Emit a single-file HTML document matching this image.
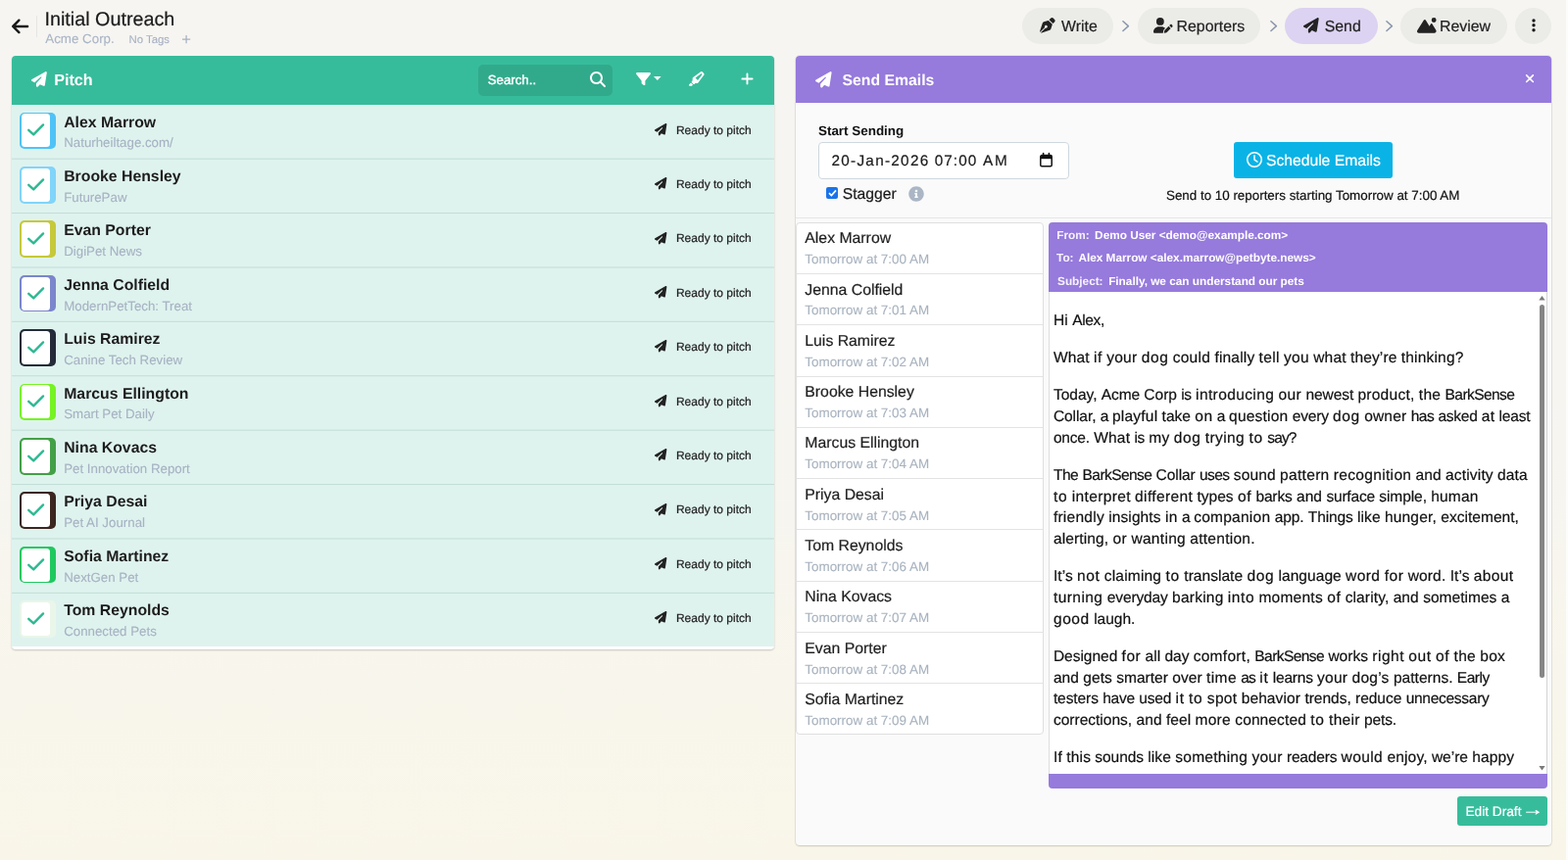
<!DOCTYPE html>
<html lang="en">
<head>
<meta charset="utf-8">
<title>Initial Outreach</title>
<style>
*{box-sizing:border-box;margin:0;padding:0}
html,body{width:1600px;height:878px;overflow:hidden}
body{position:relative;font-family:"Liberation Sans",Arial,sans-serif;color:#1a1a1a;background:linear-gradient(180deg,#f6f5f1 0%,#f6f5f1 45%,#f9f6e9 100%)}
#app,section,header,nav,ul,li,main{position:absolute;left:0;top:0;width:0;height:0;list-style:none}
#app{width:1600px;height:878px;will-change:transform;text-rendering:geometricPrecision}
.t,.k{position:absolute;white-space:nowrap}
.t{-webkit-text-stroke-width:.2px}
.b{position:absolute}
.ic{position:absolute;display:block;overflow:visible}
</style>
</head>
<body>
<div id="app">

<div class="b" style="left:1598px;top:0px;width:2px;height:878px;background:#fcfcfa;"></div>
<header>
<svg class="ic" style="left:12.1px;top:16.7px;width:17.3px;height:19.8px" viewBox="0 0 448 512" preserveAspectRatio="xMidYMid meet"><path fill="#1a1a1a" d="M9.4 233.4c-12.5 12.5-12.5 32.8 0 45.3l160 160c12.5 12.5 32.8 12.5 45.3 0s12.5-32.8 0-45.3L109.2 288 416 288c17.7 0 32-14.3 32-32s-14.3-32-32-32l-306.7 0L214.6 118.6c12.5-12.5 12.5-32.8 0-45.3s-32.8-12.5-45.3 0l-160 160z"/></svg>
<div class="b" style="left:37px;top:16px;width:1px;height:22px;background:#e6e5e1;"></div>
<h1 class="t" style="left:45.52px;top:8px;font-size:19.74px;line-height:25px;color:#1a1a1a;font-weight:400;">Initial Outreach</h1>
<div class="k" style="left:46.3px;top:31px;font-size:13.35px;line-height:17px;color:#aab4c6;-webkit-text-stroke-width:.1px;">Acme Corp.</div>
<div class="k" style="left:131.59px;top:34px;font-size:11.37px;line-height:15px;color:#a6b0c2;-webkit-text-stroke-width:.1px;">No Tags</div>
<svg class="ic" style="left:185.6px;top:35.9px;width:8.2px;height:8.2px" viewBox="0 0 10 10"><path d="M5 0v10M0 5h10" fill="none" stroke="#a6b0c2" stroke-width="1.5"/></svg>
</header>
<nav>
<div class="b" style="left:1043px;top:8px;width:93px;height:37px;background:#ebebe8;border-radius:19px;"></div>
<svg class="ic" style="left:1061px;top:18.2px;width:15.7px;height:15.7px" viewBox="0 0 512 512" preserveAspectRatio="xMidYMid meet"><path fill="#222" d="M368.4 18.3L312.7 74.1 437.9 199.3l55.7-55.7c21.9-21.9 21.9-57.3 0-79.2L447.6 18.3c-21.9-21.9-57.3-21.9-79.2 0zM288 94.6l-9.2 2.8L134.7 140.6c-19.9 6-35.7 21.2-42.3 41L3.8 445.8c-3.8 11.3-1 23.9 7.3 32.4L164.7 324.7c-3-6.3-4.7-13.3-4.7-20.7c0-26.5 21.5-48 48-48s48 21.5 48 48s-21.5 48-48 48c-7.4 0-14.4-1.7-20.7-4.7L33.7 500.9c8.6 8.3 21.1 11.2 32.4 7.3l264.3-88.6c19.7-6.6 35-22.4 41-42.3l43.2-144.1 2.8-9.2L288 94.6z"/></svg>
<div class="t" style="left:1083.03px;top:18px;font-size:15.85px;line-height:20px;color:#222;">Write</div>
<svg class="ic" style="left:1145.1px;top:21px;width:7.5px;height:11.3px" viewBox="0 0 8 12"><path d="M1 0.8L6.8 6 1 11.2" fill="none" stroke="#8c99ad" stroke-width="1.7" stroke-linecap="round" stroke-linejoin="round"/></svg>
<div class="b" style="left:1161px;top:8px;width:125.3px;height:37px;background:#ebebe8;border-radius:19px;"></div>
<svg class="ic" style="left:1177px;top:18.2px;width:19.6px;height:15.7px" viewBox="0 0 640 512" preserveAspectRatio="xMidYMid meet"><path fill="#222" d="M224 256A128 128 0 1 0 224 0a128 128 0 1 0 0 256zm-45.7 48C79.8 304 0 383.8 0 482.3C0 498.7 13.3 512 29.7 512H322.8c-3.1-8.8-3.7-18.4-1.4-27.8l15-60.1c2.8-11.3 8.6-21.5 16.8-29.7l40.3-40.3c-32.1-31-75.7-50.1-123.9-50.1H178.3zm435.5-68.3c-15.6-15.6-40.9-15.6-56.6 0l-29.4 29.4 71 71 29.4-29.4c15.6-15.6 15.6-40.9 0-56.6l-14.4-14.4zM375.9 417c-4.1 4.1-7 9.2-8.4 14.9l-15 60.1c-1.4 5.5 .2 11.2 4.2 15.2s9.7 5.6 15.2 4.2l60.1-15c5.6-1.4 10.8-4.3 14.9-8.4L576.1 358.7l-71-71L375.9 417z"/></svg>
<div class="t" style="left:1200.6px;top:18px;font-size:15.85px;line-height:20px;color:#222;">Reporters</div>
<svg class="ic" style="left:1295.5px;top:21px;width:7.5px;height:11.3px" viewBox="0 0 8 12"><path d="M1 0.8L6.8 6 1 11.2" fill="none" stroke="#8c99ad" stroke-width="1.7" stroke-linecap="round" stroke-linejoin="round"/></svg>
<div class="b" style="left:1311px;top:8px;width:94.5px;height:37px;background:#dcd2f1;border-radius:19px;"></div>
<svg class="ic" style="left:1329.5px;top:18.2px;width:15.7px;height:15.7px" viewBox="0 0 512 512" preserveAspectRatio="xMidYMid meet"><path fill="#222" d="M498.1 5.6c10.1 7 15.4 19.1 13.5 31.2l-64 416c-1.5 9.7-7.4 18.2-16 23s-18.9 5.4-28 1.6L284 427.7l-68.5 74.1c-8.9 9.7-22.9 12.9-35.2 8.1S160 493.2 160 480V396.4c0-4 1.5-7.8 4.2-10.7L331.8 202.8c5.8-6.3 5.6-16-.4-22s-15.7-6.4-22-.7L106 360.8 17.7 316.6C7.1 311.3 .3 300.7 0 288.9s5.9-22.8 16.1-28.7l448-256c10.7-6.1 23.9-5.5 34 1.4z"/></svg>
<div class="t" style="left:1351.72px;top:18px;font-size:15.85px;line-height:20px;color:#222;">Send</div>
<svg class="ic" style="left:1413.9px;top:21px;width:7.5px;height:11.3px" viewBox="0 0 8 12"><path d="M1 0.8L6.8 6 1 11.2" fill="none" stroke="#8c99ad" stroke-width="1.7" stroke-linecap="round" stroke-linejoin="round"/></svg>
<div class="b" style="left:1429.4px;top:8px;width:108.4px;height:37px;background:#ebebe8;border-radius:19px;"></div>
<svg class="ic" style="left:1446.2px;top:18.2px;width:19.6px;height:15.7px" viewBox="0 0 640 512" preserveAspectRatio="xMidYMid meet"><path fill="#222" d="M560 160A80 80 0 1 0 560 0a80 80 0 1 0 0 160zM55.9 512H381.1h75H578.9c33.8 0 61.1-27.4 61.1-61.1c0-11.2-3.1-22.2-8.9-31.8l-132-216.3C495 196.1 487.8 192 480 192s-15 4.1-19.1 10.7l-48.2 79L286.8 81c-6.6-10.6-18.3-17-30.8-17s-24.1 6.4-30.8 17L8.6 426.4C3 435.3 0 445.6 0 456.1C0 487 25 512 55.9 512z"/></svg>
<div class="t" style="left:1469.11px;top:18px;font-size:15.85px;line-height:20px;color:#222;">Review</div>
<div class="b" style="left:1546px;top:8px;width:37px;height:37px;background:#ebebe8;border-radius:19px;"></div>
<svg class="ic" style="left:1562.6px;top:18.2px;width:4px;height:15.6px" viewBox="0 0 128 512" preserveAspectRatio="xMidYMid meet"><path fill="#1a1a1a" d="M64 360a56 56 0 1 0 0 112 56 56 0 1 0 0-112zm0-160a56 56 0 1 0 0 112 56 56 0 1 0 0-112zM120 96A56 56 0 1 0 8 96a56 56 0 1 0 112 0z"/></svg>
</nav>
<section id="pitch">
<div class="b" style="left:12px;top:57px;width:778px;height:605.5px;background:#fff;border-radius:4px;box-shadow:0 1px 2px rgba(0,0,0,.2);"></div>
<div class="b" style="left:12px;top:106.6px;width:778px;height:553px;background:#dff3ee;"></div>
<div class="b" style="left:12px;top:57px;width:778px;height:49.6px;background:#37bc9b;border-radius:4px 4px 0 0;"></div>
<svg class="ic" style="left:32px;top:73px;width:15.8px;height:15.8px" viewBox="0 0 512 512" preserveAspectRatio="xMidYMid meet"><path fill="#fff" d="M498.1 5.6c10.1 7 15.4 19.1 13.5 31.2l-64 416c-1.5 9.7-7.4 18.2-16 23s-18.9 5.4-28 1.6L284 427.7l-68.5 74.1c-8.9 9.7-22.9 12.9-35.2 8.1S160 493.2 160 480V396.4c0-4 1.5-7.8 4.2-10.7L331.8 202.8c5.8-6.3 5.6-16-.4-22s-15.7-6.4-22-.7L106 360.8 17.7 316.6C7.1 311.3 .3 300.7 0 288.9s5.9-22.8 16.1-28.7l448-256c10.7-6.1 23.9-5.5 34 1.4z"/></svg>
<h2 class="k" style="left:55.2px;top:72px;font-size:16.17px;line-height:21px;font-weight:700;color:#fff;">Pitch</h2>
<div class="b" style="left:488px;top:66px;width:136.7px;height:31.5px;background:#31aa8c;border-radius:5px;"></div>
<div class="t" style="left:497.71px;top:73px;font-size:13.2px;line-height:17px;color:#fff;-webkit-text-stroke-width:.4px;letter-spacing:0.042px;">Search..</div>
<svg class="ic" style="left:601.5px;top:72.5px;width:16px;height:16px" viewBox="0 0 512 512" preserveAspectRatio="xMidYMid meet"><path fill="#fff" d="M416 208c0 45.9-14.9 88.3-40 122.7L502.6 457.4c12.5 12.5 12.5 32.8 0 45.3s-32.8 12.5-45.3 0L330.7 376c-34.4 25.2-76.8 40-122.7 40C93.1 416 0 322.9 0 208S93.1 0 208 0S416 93.1 416 208zM208 352a144 144 0 1 0 0-288 144 144 0 1 0 0 288z"/></svg>
<svg class="ic" style="left:648.6px;top:72.6px;width:15px;height:15px" viewBox="0 0 512 512" preserveAspectRatio="xMidYMid meet"><path fill="#fff" d="M3.9 54.9C10.5 40.9 24.5 32 40 32H472c15.5 0 29.5 8.9 36.1 22.9s4.6 30.5-5.2 42.5L320 320.9V448c0 12.1-6.8 23.2-17.7 28.6s-23.8 4.3-33.5-3l-64-48c-8.1-6-12.8-15.5-12.8-25.6V320.9L9 97.3C-.7 85.4-2.8 68.8 3.9 54.9z"/></svg>
<svg class="ic" style="left:666.8px;top:78.2px;width:7.6px;height:4px" viewBox="0 0 8 4"><path d="M0 0h8L4 4z" fill="#fff"/></svg>
<svg class="ic" style="left:703.2px;top:72.8px;width:16.5px;height:14.7px" viewBox="0 0 576 512" preserveAspectRatio="xMidYMid meet"><path fill="#fff" d="M315 315l158.4-215L444.1 70.6 229 229 315 315zm-187 5l0 0V248.3c0-15.3 7.2-29.6 19.5-38.6L420.6 8.4C428 2.9 437 0 446.2 0c11.4 0 22.4 4.5 30.5 12.6l54.8 54.8c8.1 8.1 12.6 19 12.6 30.5c0 9.2-2.9 18.2-8.4 25.6L334.4 396.5c-9 12.3-23.4 19.5-38.6 19.5H224l-25.4 25.4c-12.5 12.5-32.8 12.5-45.3 0l-50.7-50.7c-12.5-12.5-12.5-32.8 0-45.3L128 320zM7 466.3l63-63 70.6 70.6-31 31c-4.5 4.5-10.6 7-17 7H24c-13.3 0-24-10.7-24-24v-4.7c0-6.4 2.5-12.5 7-17z"/></svg>
<svg class="ic" style="left:755.5px;top:72.7px;width:13px;height:15px" viewBox="0 0 448 512" preserveAspectRatio="xMidYMid meet"><path fill="#fff" d="M256 80c0-17.7-14.3-32-32-32s-32 14.3-32 32V224H48c-17.7 0-32 14.3-32 32s14.3 32 32 32H192V432c0 17.7 14.3 32 32 32s32-14.3 32-32V288H400c17.7 0 32-14.3 32-32s-14.3-32-32-32H256V80z"/></svg>
<ul>
<li>
<div class="b" style="left:19.8px;top:114.6px;width:37.6px;height:37.6px;background:#4fc3f7;border-radius:5px;"></div>
<div class="b" style="left:21.5px;top:116.3px;width:29.6px;height:34.2px;background:#fff;border-radius:3.5px;"></div>
<svg class="ic" style="left:28px;top:126.4px;width:17.4px;height:12.8px" viewBox="0 0 18.4 13.4"><path d="M1.3 7.2L6.6 12 17 1.4" fill="none" stroke="#2db892" stroke-width="2.5" stroke-linecap="round" stroke-linejoin="round"/></svg>
<h3 class="k" style="left:65.2px;top:116px;font-size:15.8px;line-height:20px;font-weight:700;color:#1c1c1c;">Alex Marrow</h3>
<div class="k" style="left:65.2px;top:137px;font-size:13.3px;line-height:17px;color:#a7b2c3;-webkit-text-stroke-width:.1px;">Naturheiltage.com/</div>
<svg class="ic" style="left:667.6px;top:125.8px;width:12.4px;height:12.4px" viewBox="0 0 512 512" preserveAspectRatio="xMidYMid meet"><path fill="#222" d="M498.1 5.6c10.1 7 15.4 19.1 13.5 31.2l-64 416c-1.5 9.7-7.4 18.2-16 23s-18.9 5.4-28 1.6L284 427.7l-68.5 74.1c-8.9 9.7-22.9 12.9-35.2 8.1S160 493.2 160 480V396.4c0-4 1.5-7.8 4.2-10.7L331.8 202.8c5.8-6.3 5.6-16-.4-22s-15.7-6.4-22-.7L106 360.8 17.7 316.6C7.1 311.3 .3 300.7 0 288.9s5.9-22.8 16.1-28.7l448-256c10.7-6.1 23.9-5.5 34 1.4z"/></svg>
<div class="t" style="left:689.94px;top:126px;font-size:12px;line-height:15px;color:#222;">Ready to pitch</div>
</li>
<li>
<div class="b" style="left:12px;top:161px;width:778px;height:1px;background:#c2dcd6;transform:translateY(0.65px);"></div>
<div class="b" style="left:19.8px;top:170px;width:37.6px;height:37.6px;background:#81d4fa;border-radius:5px;"></div>
<div class="b" style="left:21.5px;top:171.7px;width:29.6px;height:34.2px;background:#fff;border-radius:3.5px;"></div>
<svg class="ic" style="left:28px;top:181.8px;width:17.4px;height:12.8px" viewBox="0 0 18.4 13.4"><path d="M1.3 7.2L6.6 12 17 1.4" fill="none" stroke="#2db892" stroke-width="2.5" stroke-linecap="round" stroke-linejoin="round"/></svg>
<h3 class="k" style="left:65.2px;top:171px;font-size:15.8px;line-height:20px;font-weight:700;color:#1c1c1c;">Brooke Hensley</h3>
<div class="k" style="left:65.2px;top:193px;font-size:13.3px;line-height:17px;color:#a7b2c3;-webkit-text-stroke-width:.1px;">FuturePaw</div>
<svg class="ic" style="left:667.6px;top:181.2px;width:12.4px;height:12.4px" viewBox="0 0 512 512" preserveAspectRatio="xMidYMid meet"><path fill="#222" d="M498.1 5.6c10.1 7 15.4 19.1 13.5 31.2l-64 416c-1.5 9.7-7.4 18.2-16 23s-18.9 5.4-28 1.6L284 427.7l-68.5 74.1c-8.9 9.7-22.9 12.9-35.2 8.1S160 493.2 160 480V396.4c0-4 1.5-7.8 4.2-10.7L331.8 202.8c5.8-6.3 5.6-16-.4-22s-15.7-6.4-22-.7L106 360.8 17.7 316.6C7.1 311.3 .3 300.7 0 288.9s5.9-22.8 16.1-28.7l448-256c10.7-6.1 23.9-5.5 34 1.4z"/></svg>
<div class="t" style="left:689.94px;top:181px;font-size:12px;line-height:15px;color:#222;">Ready to pitch</div>
</li>
<li>
<div class="b" style="left:12px;top:217px;width:778px;height:1px;background:#c2dcd6;transform:translateY(0.05px);"></div>
<div class="b" style="left:19.8px;top:225.4px;width:37.6px;height:37.6px;background:#c6c93a;border-radius:5px;"></div>
<div class="b" style="left:21.5px;top:227.1px;width:29.6px;height:34.2px;background:#fff;border-radius:3.5px;"></div>
<svg class="ic" style="left:28px;top:237.2px;width:17.4px;height:12.8px" viewBox="0 0 18.4 13.4"><path d="M1.3 7.2L6.6 12 17 1.4" fill="none" stroke="#2db892" stroke-width="2.5" stroke-linecap="round" stroke-linejoin="round"/></svg>
<h3 class="k" style="left:65.2px;top:226px;font-size:15.8px;line-height:20px;font-weight:700;color:#1c1c1c;">Evan Porter</h3>
<div class="k" style="left:65.2px;top:248px;font-size:13.3px;line-height:17px;color:#a7b2c3;-webkit-text-stroke-width:.1px;">DigiPet News</div>
<svg class="ic" style="left:667.6px;top:236.6px;width:12.4px;height:12.4px" viewBox="0 0 512 512" preserveAspectRatio="xMidYMid meet"><path fill="#222" d="M498.1 5.6c10.1 7 15.4 19.1 13.5 31.2l-64 416c-1.5 9.7-7.4 18.2-16 23s-18.9 5.4-28 1.6L284 427.7l-68.5 74.1c-8.9 9.7-22.9 12.9-35.2 8.1S160 493.2 160 480V396.4c0-4 1.5-7.8 4.2-10.7L331.8 202.8c5.8-6.3 5.6-16-.4-22s-15.7-6.4-22-.7L106 360.8 17.7 316.6C7.1 311.3 .3 300.7 0 288.9s5.9-22.8 16.1-28.7l448-256c10.7-6.1 23.9-5.5 34 1.4z"/></svg>
<div class="t" style="left:689.94px;top:236px;font-size:12px;line-height:15px;color:#222;">Ready to pitch</div>
</li>
<li>
<div class="b" style="left:12px;top:272px;width:778px;height:1px;background:#c2dcd6;transform:translateY(0.45px);"></div>
<div class="b" style="left:19.8px;top:280.8px;width:37.6px;height:37.6px;background:#7b86cc;border-radius:5px;"></div>
<div class="b" style="left:21.5px;top:282.5px;width:29.6px;height:34.2px;background:#fff;border-radius:3.5px;"></div>
<svg class="ic" style="left:28px;top:292.6px;width:17.4px;height:12.8px" viewBox="0 0 18.4 13.4"><path d="M1.3 7.2L6.6 12 17 1.4" fill="none" stroke="#2db892" stroke-width="2.5" stroke-linecap="round" stroke-linejoin="round"/></svg>
<h3 class="k" style="left:65.2px;top:282px;font-size:15.8px;line-height:20px;font-weight:700;color:#1c1c1c;">Jenna Colfield</h3>
<div class="k" style="left:65.2px;top:304px;font-size:13.3px;line-height:17px;color:#a7b2c3;-webkit-text-stroke-width:.1px;">ModernPetTech: Treat</div>
<svg class="ic" style="left:667.6px;top:292px;width:12.4px;height:12.4px" viewBox="0 0 512 512" preserveAspectRatio="xMidYMid meet"><path fill="#222" d="M498.1 5.6c10.1 7 15.4 19.1 13.5 31.2l-64 416c-1.5 9.7-7.4 18.2-16 23s-18.9 5.4-28 1.6L284 427.7l-68.5 74.1c-8.9 9.7-22.9 12.9-35.2 8.1S160 493.2 160 480V396.4c0-4 1.5-7.8 4.2-10.7L331.8 202.8c5.8-6.3 5.6-16-.4-22s-15.7-6.4-22-.7L106 360.8 17.7 316.6C7.1 311.3 .3 300.7 0 288.9s5.9-22.8 16.1-28.7l448-256c10.7-6.1 23.9-5.5 34 1.4z"/></svg>
<div class="t" style="left:689.94px;top:292px;font-size:12px;line-height:15px;color:#222;">Ready to pitch</div>
</li>
<li>
<div class="b" style="left:12px;top:327px;width:778px;height:1px;background:#c2dcd6;transform:translateY(0.85px);"></div>
<div class="b" style="left:19.8px;top:336.2px;width:37.6px;height:37.6px;background:#252b38;border-radius:5px;"></div>
<div class="b" style="left:21.5px;top:337.9px;width:29.6px;height:34.2px;background:#fff;border-radius:3.5px;"></div>
<svg class="ic" style="left:28px;top:348px;width:17.4px;height:12.8px" viewBox="0 0 18.4 13.4"><path d="M1.3 7.2L6.6 12 17 1.4" fill="none" stroke="#2db892" stroke-width="2.5" stroke-linecap="round" stroke-linejoin="round"/></svg>
<h3 class="k" style="left:65.2px;top:337px;font-size:15.8px;line-height:20px;font-weight:700;color:#1c1c1c;">Luis Ramirez</h3>
<div class="k" style="left:65.2px;top:359px;font-size:13.3px;line-height:17px;color:#a7b2c3;-webkit-text-stroke-width:.1px;">Canine Tech Review</div>
<svg class="ic" style="left:667.6px;top:347.4px;width:12.4px;height:12.4px" viewBox="0 0 512 512" preserveAspectRatio="xMidYMid meet"><path fill="#222" d="M498.1 5.6c10.1 7 15.4 19.1 13.5 31.2l-64 416c-1.5 9.7-7.4 18.2-16 23s-18.9 5.4-28 1.6L284 427.7l-68.5 74.1c-8.9 9.7-22.9 12.9-35.2 8.1S160 493.2 160 480V396.4c0-4 1.5-7.8 4.2-10.7L331.8 202.8c5.8-6.3 5.6-16-.4-22s-15.7-6.4-22-.7L106 360.8 17.7 316.6C7.1 311.3 .3 300.7 0 288.9s5.9-22.8 16.1-28.7l448-256c10.7-6.1 23.9-5.5 34 1.4z"/></svg>
<div class="t" style="left:689.94px;top:347px;font-size:12px;line-height:15px;color:#222;">Ready to pitch</div>
</li>
<li>
<div class="b" style="left:12px;top:383px;width:778px;height:1px;background:#c2dcd6;transform:translateY(0.25px);"></div>
<div class="b" style="left:19.8px;top:391.6px;width:37.6px;height:37.6px;background:#76f322;border-radius:5px;"></div>
<div class="b" style="left:21.5px;top:393.3px;width:29.6px;height:34.2px;background:#fff;border-radius:3.5px;"></div>
<svg class="ic" style="left:28px;top:403.4px;width:17.4px;height:12.8px" viewBox="0 0 18.4 13.4"><path d="M1.3 7.2L6.6 12 17 1.4" fill="none" stroke="#2db892" stroke-width="2.5" stroke-linecap="round" stroke-linejoin="round"/></svg>
<h3 class="k" style="left:65.2px;top:393px;font-size:15.8px;line-height:20px;font-weight:700;color:#1c1c1c;">Marcus Ellington</h3>
<div class="k" style="left:65.2px;top:414px;font-size:13.3px;line-height:17px;color:#a7b2c3;-webkit-text-stroke-width:.1px;">Smart Pet Daily</div>
<svg class="ic" style="left:667.6px;top:402.8px;width:12.4px;height:12.4px" viewBox="0 0 512 512" preserveAspectRatio="xMidYMid meet"><path fill="#222" d="M498.1 5.6c10.1 7 15.4 19.1 13.5 31.2l-64 416c-1.5 9.7-7.4 18.2-16 23s-18.9 5.4-28 1.6L284 427.7l-68.5 74.1c-8.9 9.7-22.9 12.9-35.2 8.1S160 493.2 160 480V396.4c0-4 1.5-7.8 4.2-10.7L331.8 202.8c5.8-6.3 5.6-16-.4-22s-15.7-6.4-22-.7L106 360.8 17.7 316.6C7.1 311.3 .3 300.7 0 288.9s5.9-22.8 16.1-28.7l448-256c10.7-6.1 23.9-5.5 34 1.4z"/></svg>
<div class="t" style="left:689.94px;top:403px;font-size:12px;line-height:15px;color:#222;">Ready to pitch</div>
</li>
<li>
<div class="b" style="left:12px;top:438px;width:778px;height:1px;background:#c2dcd6;transform:translateY(0.65px);"></div>
<div class="b" style="left:19.8px;top:447px;width:37.6px;height:37.6px;background:#43a047;border-radius:5px;"></div>
<div class="b" style="left:21.5px;top:448.7px;width:29.6px;height:34.2px;background:#fff;border-radius:3.5px;"></div>
<svg class="ic" style="left:28px;top:458.8px;width:17.4px;height:12.8px" viewBox="0 0 18.4 13.4"><path d="M1.3 7.2L6.6 12 17 1.4" fill="none" stroke="#2db892" stroke-width="2.5" stroke-linecap="round" stroke-linejoin="round"/></svg>
<h3 class="k" style="left:65.2px;top:448px;font-size:15.8px;line-height:20px;font-weight:700;color:#1c1c1c;">Nina Kovacs</h3>
<div class="k" style="left:65.2px;top:470px;font-size:13.3px;line-height:17px;color:#a7b2c3;-webkit-text-stroke-width:.1px;">Pet Innovation Report</div>
<svg class="ic" style="left:667.6px;top:458.2px;width:12.4px;height:12.4px" viewBox="0 0 512 512" preserveAspectRatio="xMidYMid meet"><path fill="#222" d="M498.1 5.6c10.1 7 15.4 19.1 13.5 31.2l-64 416c-1.5 9.7-7.4 18.2-16 23s-18.9 5.4-28 1.6L284 427.7l-68.5 74.1c-8.9 9.7-22.9 12.9-35.2 8.1S160 493.2 160 480V396.4c0-4 1.5-7.8 4.2-10.7L331.8 202.8c5.8-6.3 5.6-16-.4-22s-15.7-6.4-22-.7L106 360.8 17.7 316.6C7.1 311.3 .3 300.7 0 288.9s5.9-22.8 16.1-28.7l448-256c10.7-6.1 23.9-5.5 34 1.4z"/></svg>
<div class="t" style="left:689.94px;top:458px;font-size:12px;line-height:15px;color:#222;">Ready to pitch</div>
</li>
<li>
<div class="b" style="left:12px;top:494px;width:778px;height:1px;background:#c2dcd6;transform:translateY(0.05px);"></div>
<div class="b" style="left:19.8px;top:502.4px;width:37.6px;height:37.6px;background:#3b2620;border-radius:5px;"></div>
<div class="b" style="left:21.5px;top:504.1px;width:29.6px;height:34.2px;background:#fff;border-radius:3.5px;"></div>
<svg class="ic" style="left:28px;top:514.2px;width:17.4px;height:12.8px" viewBox="0 0 18.4 13.4"><path d="M1.3 7.2L6.6 12 17 1.4" fill="none" stroke="#2db892" stroke-width="2.5" stroke-linecap="round" stroke-linejoin="round"/></svg>
<h3 class="k" style="left:65.2px;top:503px;font-size:15.8px;line-height:20px;font-weight:700;color:#1c1c1c;">Priya Desai</h3>
<div class="k" style="left:65.2px;top:525px;font-size:13.3px;line-height:17px;color:#a7b2c3;-webkit-text-stroke-width:.1px;">Pet AI Journal</div>
<svg class="ic" style="left:667.6px;top:513.6px;width:12.4px;height:12.4px" viewBox="0 0 512 512" preserveAspectRatio="xMidYMid meet"><path fill="#222" d="M498.1 5.6c10.1 7 15.4 19.1 13.5 31.2l-64 416c-1.5 9.7-7.4 18.2-16 23s-18.9 5.4-28 1.6L284 427.7l-68.5 74.1c-8.9 9.7-22.9 12.9-35.2 8.1S160 493.2 160 480V396.4c0-4 1.5-7.8 4.2-10.7L331.8 202.8c5.8-6.3 5.6-16-.4-22s-15.7-6.4-22-.7L106 360.8 17.7 316.6C7.1 311.3 .3 300.7 0 288.9s5.9-22.8 16.1-28.7l448-256c10.7-6.1 23.9-5.5 34 1.4z"/></svg>
<div class="t" style="left:689.94px;top:513px;font-size:12px;line-height:15px;color:#222;">Ready to pitch</div>
</li>
<li>
<div class="b" style="left:12px;top:549px;width:778px;height:1px;background:#c2dcd6;transform:translateY(0.45px);"></div>
<div class="b" style="left:19.8px;top:557.8px;width:37.6px;height:37.6px;background:#1fc95f;border-radius:5px;"></div>
<div class="b" style="left:21.5px;top:559.5px;width:29.6px;height:34.2px;background:#fff;border-radius:3.5px;"></div>
<svg class="ic" style="left:28px;top:569.6px;width:17.4px;height:12.8px" viewBox="0 0 18.4 13.4"><path d="M1.3 7.2L6.6 12 17 1.4" fill="none" stroke="#2db892" stroke-width="2.5" stroke-linecap="round" stroke-linejoin="round"/></svg>
<h3 class="k" style="left:65.2px;top:559px;font-size:15.8px;line-height:20px;font-weight:700;color:#1c1c1c;">Sofia Martinez</h3>
<div class="k" style="left:65.2px;top:581px;font-size:13.3px;line-height:17px;color:#a7b2c3;-webkit-text-stroke-width:.1px;">NextGen Pet</div>
<svg class="ic" style="left:667.6px;top:569px;width:12.4px;height:12.4px" viewBox="0 0 512 512" preserveAspectRatio="xMidYMid meet"><path fill="#222" d="M498.1 5.6c10.1 7 15.4 19.1 13.5 31.2l-64 416c-1.5 9.7-7.4 18.2-16 23s-18.9 5.4-28 1.6L284 427.7l-68.5 74.1c-8.9 9.7-22.9 12.9-35.2 8.1S160 493.2 160 480V396.4c0-4 1.5-7.8 4.2-10.7L331.8 202.8c5.8-6.3 5.6-16-.4-22s-15.7-6.4-22-.7L106 360.8 17.7 316.6C7.1 311.3 .3 300.7 0 288.9s5.9-22.8 16.1-28.7l448-256c10.7-6.1 23.9-5.5 34 1.4z"/></svg>
<div class="t" style="left:689.94px;top:569px;font-size:12px;line-height:15px;color:#222;">Ready to pitch</div>
</li>
<li>
<div class="b" style="left:12px;top:604px;width:778px;height:1px;background:#c2dcd6;transform:translateY(0.85px);"></div>
<div class="b" style="left:19.8px;top:613.2px;width:37.6px;height:37.6px;background:#eaf6ea;border-radius:5px;"></div>
<div class="b" style="left:21.5px;top:614.9px;width:29.6px;height:34.2px;background:#fff;border-radius:3.5px;"></div>
<svg class="ic" style="left:28px;top:625px;width:17.4px;height:12.8px" viewBox="0 0 18.4 13.4"><path d="M1.3 7.2L6.6 12 17 1.4" fill="none" stroke="#2db892" stroke-width="2.5" stroke-linecap="round" stroke-linejoin="round"/></svg>
<h3 class="k" style="left:65.2px;top:614px;font-size:15.8px;line-height:20px;font-weight:700;color:#1c1c1c;">Tom Reynolds</h3>
<div class="k" style="left:65.2px;top:636px;font-size:13.3px;line-height:17px;color:#a7b2c3;-webkit-text-stroke-width:.1px;">Connected Pets</div>
<svg class="ic" style="left:667.6px;top:624.4px;width:12.4px;height:12.4px" viewBox="0 0 512 512" preserveAspectRatio="xMidYMid meet"><path fill="#222" d="M498.1 5.6c10.1 7 15.4 19.1 13.5 31.2l-64 416c-1.5 9.7-7.4 18.2-16 23s-18.9 5.4-28 1.6L284 427.7l-68.5 74.1c-8.9 9.7-22.9 12.9-35.2 8.1S160 493.2 160 480V396.4c0-4 1.5-7.8 4.2-10.7L331.8 202.8c5.8-6.3 5.6-16-.4-22s-15.7-6.4-22-.7L106 360.8 17.7 316.6C7.1 311.3 .3 300.7 0 288.9s5.9-22.8 16.1-28.7l448-256c10.7-6.1 23.9-5.5 34 1.4z"/></svg>
<div class="t" style="left:689.94px;top:624px;font-size:12px;line-height:15px;color:#222;">Ready to pitch</div>
</li>
</ul>
</section>
<section id="send">
<div class="b" style="left:812px;top:57px;width:771px;height:805.5px;background:#fafafa;border-radius:4px;box-shadow:0 0 0 1px rgba(0,0,0,.06),0 1px 2px rgba(0,0,0,.14);"></div>
<div class="b" style="left:812px;top:57px;width:771px;height:48px;background:#967adc;border-radius:4px 4px 0 0;"></div>
<svg class="ic" style="left:832px;top:72.5px;width:16.6px;height:16.6px" viewBox="0 0 512 512" preserveAspectRatio="xMidYMid meet"><path fill="#fff" d="M498.1 5.6c10.1 7 15.4 19.1 13.5 31.2l-64 416c-1.5 9.7-7.4 18.2-16 23s-18.9 5.4-28 1.6L284 427.7l-68.5 74.1c-8.9 9.7-22.9 12.9-35.2 8.1S160 493.2 160 480V396.4c0-4 1.5-7.8 4.2-10.7L331.8 202.8c5.8-6.3 5.6-16-.4-22s-15.7-6.4-22-.7L106 360.8 17.7 316.6C7.1 311.3 .3 300.7 0 288.9s5.9-22.8 16.1-28.7l448-256c10.7-6.1 23.9-5.5 34 1.4z"/></svg>
<h2 class="k" style="left:859.61px;top:73px;font-size:15.76px;line-height:20px;font-weight:700;color:#fff;">Send Emails</h2>
<svg class="ic" style="left:1555.7px;top:73.2px;width:10px;height:14.4px" viewBox="0 0 384 512" preserveAspectRatio="xMidYMid meet"><path fill="#fff" d="M342.6 150.6c12.5-12.5 12.5-32.8 0-45.3s-32.8-12.5-45.3 0L192 210.7 86.6 105.4c-12.5-12.5-32.8-12.5-45.3 0s-12.5 32.8 0 45.3L146.7 256 41.4 361.4c-12.5 12.5-12.5 32.8 0 45.3s32.8 12.5 45.3 0L192 301.3 297.4 406.6c12.5 12.5 32.8 12.5 45.3 0s12.5-32.8 0-45.3L237.3 256 342.6 150.6z"/></svg>
<div class="k" style="left:834.96px;top:125px;font-size:13.43px;line-height:17px;font-weight:700;color:#111;">Start Sending</div>
<div class="b" style="left:835.3px;top:145.3px;width:255.5px;height:37.4px;background:#fff;border:1px solid #cfd8df;border-radius:4px;"></div>
<div class="t" style="left:848.44px;top:155px;font-size:15.3px;line-height:20px;color:#1a1a1a;white-space:pre;"><span style="display:inline-block;width:105.23px;letter-spacing:1.288px">20-Jan-2026 </span><span style="display:inline-block;width:49.34px;letter-spacing:1.1px">07:00 </span><span style="display:inline-block;letter-spacing:1.844px">AM</span></div>
<svg class="ic" style="left:1061.4px;top:156px;width:13px;height:14.6px" viewBox="0 0 13 14.6"><path d="M2 2.6h9a1.2 1.2 0 0 1 1.2 1.2v8.8a1.2 1.2 0 0 1-1.2 1.2H2a1.2 1.2 0 0 1-1.2-1.2V3.8A1.2 1.2 0 0 1 2 2.6z" fill="none" stroke="#111" stroke-width="1.5"/><path d="M1 3h11v3.2H1z" fill="#111"/><path d="M3.6 0.6v2.6M9.4 0.6v2.6" stroke="#111" stroke-width="1.6" stroke-linecap="round"/></svg>
<div class="b" style="left:843px;top:191px;width:12px;height:12px;background:#1a73e8;border-radius:2px;"></div>
<svg class="ic" style="left:844.5px;top:193px;width:9px;height:8px" viewBox="0 0 9 8"><path d="M1 4.2l2.4 2.4L8 1.4" fill="none" stroke="#fff" stroke-width="1.7"/></svg>
<div class="t" style="left:859.8px;top:189px;font-size:15.7px;line-height:20px;color:#1a1a1a;">Stagger</div>
<svg class="ic" style="left:927px;top:189.8px;width:16px;height:16px" viewBox="0 0 512 512" preserveAspectRatio="xMidYMid meet"><path fill="#abb6c5" d="M256 8C119.043 8 8 119.083 8 256c0 136.997 111.043 248 248 248s248-111.003 248-248C504 119.083 392.957 8 256 8zm0 110c23.196 0 42 18.804 42 42s-18.804 42-42 42-42-18.804-42-42 18.804-42 42-42zm56 254c0 6.627-5.373 12-12 12h-88c-6.627 0-12-5.373-12-12v-24c0-6.627 5.373-12 12-12h12v-64h-12c-6.627 0-12-5.373-12-12v-24c0-6.627 5.373-12 12-12h64c6.627 0 12 5.373 12 12v100h12c6.627 0 12 5.373 12 12v24z"/></svg>
<div class="b" style="left:1258.8px;top:145px;width:162.5px;height:37px;background:#0ab3e6;border-radius:3px;"></div>
<svg class="ic" style="left:1271.5px;top:155.3px;width:16px;height:16px" viewBox="0 0 512 512" preserveAspectRatio="xMidYMid meet"><path fill="#fff" d="M464 256A208 208 0 1 1 48 256a208 208 0 1 1 416 0zM0 256a256 256 0 1 0 512 0A256 256 0 1 0 0 256zM232 120V256c0 8 4 15.5 10.7 20l96 64c11 7.4 25.9 4.4 33.3-6.7s4.4-25.9-6.7-33.3L280 243.2V120c0-13.3-10.7-24-24-24s-24 10.7-24 24z"/></svg>
<div class="t" style="left:1291.93px;top:155px;font-size:15.7px;line-height:20px;color:#fff;">Schedule Emails</div>
<div class="t" style="left:1190px;top:191px;font-size:13.39px;line-height:17px;color:#111;">Send to 10 reporters starting Tomorrow at 7:00 AM</div>
<div class="b" style="left:812px;top:221.7px;width:771px;height:1px;background:#e6e6e6;"></div>
<div class="b" style="left:812px;top:227px;width:253px;height:523px;background:#fff;border:1px solid #dfdfdf;border-radius:4px;"></div>
<ul>
<li>
<div class="t" style="left:821.3px;top:234px;font-size:15.8px;line-height:20px;color:#1f1f1f;">Alex Marrow</div>
<div class="k" style="left:821.3px;top:256px;font-size:13.43px;line-height:17px;color:#a8b3bf;-webkit-text-stroke-width:.1px;">Tomorrow at 7:00 AM</div>
</li>
<li>
<div class="b" style="left:813px;top:279.1px;width:251px;height:1px;background:#e3e3e3;"></div>
<div class="t" style="left:821.3px;top:287px;font-size:15.8px;line-height:20px;color:#1f1f1f;">Jenna Colfield</div>
<div class="k" style="left:821.3px;top:308px;font-size:13.43px;line-height:17px;color:#a8b3bf;-webkit-text-stroke-width:.1px;">Tomorrow at 7:01 AM</div>
</li>
<li>
<div class="b" style="left:813px;top:331.3px;width:251px;height:1px;background:#e3e3e3;"></div>
<div class="t" style="left:821.3px;top:339px;font-size:15.8px;line-height:20px;color:#1f1f1f;">Luis Ramirez</div>
<div class="k" style="left:821.3px;top:361px;font-size:13.43px;line-height:17px;color:#a8b3bf;-webkit-text-stroke-width:.1px;">Tomorrow at 7:02 AM</div>
</li>
<li>
<div class="b" style="left:813px;top:383.6px;width:251px;height:1px;background:#e3e3e3;"></div>
<div class="t" style="left:821.3px;top:391px;font-size:15.8px;line-height:20px;color:#1f1f1f;">Brooke Hensley</div>
<div class="k" style="left:821.3px;top:413px;font-size:13.43px;line-height:17px;color:#a8b3bf;-webkit-text-stroke-width:.1px;">Tomorrow at 7:03 AM</div>
</li>
<li>
<div class="b" style="left:813px;top:435.8px;width:251px;height:1px;background:#e3e3e3;"></div>
<div class="t" style="left:821.3px;top:443px;font-size:15.8px;line-height:20px;color:#1f1f1f;">Marcus Ellington</div>
<div class="k" style="left:821.3px;top:465px;font-size:13.43px;line-height:17px;color:#a8b3bf;-webkit-text-stroke-width:.1px;">Tomorrow at 7:04 AM</div>
</li>
<li>
<div class="b" style="left:813px;top:488.1px;width:251px;height:1px;background:#e3e3e3;"></div>
<div class="t" style="left:821.3px;top:496px;font-size:15.8px;line-height:20px;color:#1f1f1f;">Priya Desai</div>
<div class="k" style="left:821.3px;top:518px;font-size:13.43px;line-height:17px;color:#a8b3bf;-webkit-text-stroke-width:.1px;">Tomorrow at 7:05 AM</div>
</li>
<li>
<div class="b" style="left:813px;top:540.3px;width:251px;height:1px;background:#e3e3e3;"></div>
<div class="t" style="left:821.3px;top:548px;font-size:15.8px;line-height:20px;color:#1f1f1f;">Tom Reynolds</div>
<div class="k" style="left:821.3px;top:570px;font-size:13.43px;line-height:17px;color:#a8b3bf;-webkit-text-stroke-width:.1px;">Tomorrow at 7:06 AM</div>
</li>
<li>
<div class="b" style="left:813px;top:592.5px;width:251px;height:1px;background:#e3e3e3;"></div>
<div class="t" style="left:821.3px;top:600px;font-size:15.8px;line-height:20px;color:#1f1f1f;">Nina Kovacs</div>
<div class="k" style="left:821.3px;top:622px;font-size:13.43px;line-height:17px;color:#a8b3bf;-webkit-text-stroke-width:.1px;">Tomorrow at 7:07 AM</div>
</li>
<li>
<div class="b" style="left:813px;top:644.8px;width:251px;height:1px;background:#e3e3e3;"></div>
<div class="t" style="left:821.3px;top:653px;font-size:15.8px;line-height:20px;color:#1f1f1f;">Evan Porter</div>
<div class="k" style="left:821.3px;top:675px;font-size:13.43px;line-height:17px;color:#a8b3bf;-webkit-text-stroke-width:.1px;">Tomorrow at 7:08 AM</div>
</li>
<li>
<div class="b" style="left:813px;top:697px;width:251px;height:1px;background:#e3e3e3;"></div>
<div class="t" style="left:821.3px;top:705px;font-size:15.8px;line-height:20px;color:#1f1f1f;">Sofia Martinez</div>
<div class="k" style="left:821.3px;top:727px;font-size:13.43px;line-height:17px;color:#a8b3bf;-webkit-text-stroke-width:.1px;">Tomorrow at 7:09 AM</div>
</li>
</ul>
<div class="b" style="left:1069.5px;top:227px;width:509.5px;height:578.3px;background:#967adc;border-radius:4px;"></div>
<div class="b" style="left:1069.5px;top:298px;width:509.5px;height:491.5px;background:#fff;border-left:1px solid #dedede;border-right:1px solid #d4d4d4;"></div>
<div class="k" style="left:1078.3px;top:233px;font-size:11.8px;line-height:15px;font-weight:700;color:rgba(255,255,255,.9);">From:</div><div class="k" style="left:1117.12px;top:233px;font-size:11.8px;line-height:15px;font-weight:700;color:#fff;">Demo User &lt;demo@example.com&gt;</div>
<div class="k" style="left:1078.05px;top:256px;font-size:11.8px;line-height:15px;font-weight:700;color:rgba(255,255,255,.9);">To:</div><div class="k" style="left:1100.38px;top:256px;font-size:11.8px;line-height:15px;font-weight:700;color:#fff;">Alex Marrow &lt;alex.marrow@petbyte.news&gt;</div>
<div class="k" style="left:1079.03px;top:280px;font-size:11.8px;line-height:15px;font-weight:700;color:rgba(255,255,255,.9);">Subject:</div><div class="k" style="left:1131.15px;top:280px;font-size:11.8px;line-height:15px;font-weight:700;color:#fff;">Finally, we can understand our pets</div>
<main>
<p class="t" style="left:1074.9px;top:318px;font-size:15.5px;line-height:20px;color:#111;white-space:pre"><span style="display:inline-block;width:19.3px;letter-spacing:0.175px">Hi </span><span style="display:inline-block;width:32.84px;letter-spacing:-0.324px">Alex,</span></p>
<p class="t" style="left:1074.9px;top:356px;font-size:15.5px;line-height:20px;color:#111;white-space:pre"><span style="display:inline-block;width:41.22px;letter-spacing:0.182px">What </span><span style="display:inline-block;width:13.05px;letter-spacing:0.494px">if </span><span style="display:inline-block;width:35.51px;letter-spacing:0.261px">your </span><span style="display:inline-block;width:32.04px;letter-spacing:0.623px">dog </span><span style="display:inline-block;width:42.76px;letter-spacing:0.279px">could </span><span style="display:inline-block;width:45.18px;letter-spacing:0.178px">finally </span><span style="display:inline-block;width:25.51px;letter-spacing:0.346px">tell </span><span style="display:inline-block;width:30.04px;letter-spacing:0.244px">you </span><span style="display:inline-block;width:37.91px;letter-spacing:0.215px">what </span><span style="display:inline-block;width:51.71px;letter-spacing:0.125px">they’re </span><span style="display:inline-block;width:63.77px;letter-spacing:0.191px">thinking?</span></p>
<p class="t" style="left:1074.9px;top:394px;font-size:15.5px;line-height:20px;color:#111;white-space:pre"><span style="display:inline-block;width:48.88px;letter-spacing:0.009px">Today, </span><span style="display:inline-block;width:43.52px;letter-spacing:-0.104px">Acme </span><span style="display:inline-block;width:38.01px;letter-spacing:0.024px">Corp </span><span style="display:inline-block;width:14.8px;letter-spacing:-0.351px">is </span><span style="display:inline-block;width:84.42px;letter-spacing:0.389px">introducing </span><span style="display:inline-block;width:27.9px;letter-spacing:0.395px">our </span><span style="display:inline-block;width:53.06px;letter-spacing:-0.06px">newest </span><span style="display:inline-block;width:62.42px;letter-spacing:0.263px">product, </span><span style="display:inline-block;width:26.78px;letter-spacing:0.306px">the </span><span style="display:inline-block;width:70.73px;letter-spacing:-0.566px">BarkSense</span></p>
<p class="t" style="left:1074.9px;top:416px;font-size:15.5px;line-height:20px;color:#111;white-space:pre"><span style="display:inline-block;width:47.8px;letter-spacing:-0.064px">Collar, </span><span style="display:inline-block;width:12.32px;letter-spacing:-0.612px">a </span><span style="display:inline-block;width:50.62px;letter-spacing:0.215px">playful </span><span style="display:inline-block;width:33.72px;letter-spacing:0.027px">take </span><span style="display:inline-block;width:22.43px;letter-spacing:0.437px">on </span><span style="display:inline-block;width:12.32px;letter-spacing:-0.612px">a </span><span style="display:inline-block;width:64.64px;letter-spacing:0.215px">question </span><span style="display:inline-block;width:41.42px;letter-spacing:-0.159px">every </span><span style="display:inline-block;width:32.04px;letter-spacing:0.623px">dog </span><span style="display:inline-block;width:47.5px;letter-spacing:0.195px">owner </span><span style="display:inline-block;width:27.89px;letter-spacing:-0.47px">has </span><span style="display:inline-block;width:44.31px;letter-spacing:-0.272px">asked </span><span style="display:inline-block;width:17.65px;letter-spacing:0.208px">at </span><span style="display:inline-block;width:32.07px;letter-spacing:-0.134px">least</span></p>
<p class="t" style="left:1074.9px;top:438px;font-size:15.5px;line-height:20px;color:#111;white-space:pre"><span style="display:inline-block;width:41.35px;letter-spacing:-0.176px">once. </span><span style="display:inline-block;width:41.22px;letter-spacing:0.182px">What </span><span style="display:inline-block;width:14.8px;letter-spacing:-0.351px">is </span><span style="display:inline-block;width:25.46px;letter-spacing:0.245px">my </span><span style="display:inline-block;width:32.04px;letter-spacing:0.623px">dog </span><span style="display:inline-block;width:44.68px;letter-spacing:0.412px">trying </span><span style="display:inline-block;width:18.87px;letter-spacing:0.815px">to </span><span style="display:inline-block;width:29.35px;letter-spacing:-0.847px">say?</span></p>
<p class="t" style="left:1074.9px;top:476px;font-size:15.5px;line-height:20px;color:#111;white-space:pre"><span style="display:inline-block;width:29.69px;letter-spacing:-0.444px">The </span><span style="display:inline-block;width:75.04px;letter-spacing:-0.566px">BarkSense </span><span style="display:inline-block;width:44.38px;letter-spacing:-0.068px">Collar </span><span style="display:inline-block;width:34.8px;letter-spacing:-0.563px">uses </span><span style="display:inline-block;width:47.25px;letter-spacing:0.142px">sound </span><span style="display:inline-block;width:54.84px;letter-spacing:0.325px">pattern </span><span style="display:inline-block;width:83.73px;letter-spacing:0.327px">recognition </span><span style="display:inline-block;width:30.47px;letter-spacing:0.098px">and </span><span style="display:inline-block;width:53.04px;letter-spacing:0.17px">activity </span><span style="display:inline-block;width:30.6px;letter-spacing:0.109px">data</span></p>
<p class="t" style="left:1074.9px;top:498px;font-size:15.5px;line-height:20px;color:#111;white-space:pre"><span style="display:inline-block;width:18.87px;letter-spacing:0.815px">to </span><span style="display:inline-block;width:64.36px;letter-spacing:0.354px">interpret </span><span style="display:inline-block;width:63.41px;letter-spacing:0.374px">different </span><span style="display:inline-block;width:41.43px;letter-spacing:0.013px">types </span><span style="display:inline-block;width:18.46px;letter-spacing:0.611px">of </span><span style="display:inline-block;width:41.55px;letter-spacing:-0.133px">barks </span><span style="display:inline-block;width:30.47px;letter-spacing:0.098px">and </span><span style="display:inline-block;width:53.8px;letter-spacing:-0.192px">surface </span><span style="display:inline-block;width:53.06px;letter-spacing:-0.05px">simple, </span><span style="display:inline-block;width:48.23px;letter-spacing:0.167px">human</span></p>
<p class="t" style="left:1074.9px;top:519px;font-size:15.5px;line-height:20px;color:#111;white-space:pre"><span style="display:inline-block;width:56.33px;letter-spacing:0.256px">friendly </span><span style="display:inline-block;width:57.66px;letter-spacing:0.1px">insights </span><span style="display:inline-block;width:17.02px;letter-spacing:0.32px">in </span><span style="display:inline-block;width:12.32px;letter-spacing:-0.612px">a </span><span style="display:inline-block;width:82.43px;letter-spacing:0.254px">companion </span><span style="display:inline-block;width:34.24px;letter-spacing:-0.06px">app. </span><span style="display:inline-block;width:50.09px;letter-spacing:-0.125px">Things </span><span style="display:inline-block;width:28px;letter-spacing:0.107px">like </span><span style="display:inline-block;width:57.36px;letter-spacing:0.191px">hunger, </span><span style="display:inline-block;width:79.54px;letter-spacing:0.026px">excitement,</span></p>
<p class="t" style="left:1074.9px;top:541px;font-size:15.5px;line-height:20px;color:#111;white-space:pre"><span style="display:inline-block;width:60.55px;letter-spacing:0.121px">alerting, </span><span style="display:inline-block;width:19.01px;letter-spacing:0.456px">or </span><span style="display:inline-block;width:59.87px;letter-spacing:0.305px">wanting </span><span style="display:inline-block;width:66.48px;letter-spacing:0.271px">attention.</span></p>
<p class="t" style="left:1074.9px;top:579px;font-size:15.5px;line-height:20px;color:#111;white-space:pre"><span style="display:inline-block;width:24.12px;letter-spacing:0.072px">It’s </span><span style="display:inline-block;width:27.76px;letter-spacing:0.634px">not </span><span style="display:inline-block;width:62.71px;letter-spacing:0.194px">claiming </span><span style="display:inline-block;width:18.87px;letter-spacing:0.815px">to </span><span style="display:inline-block;width:64.09px;letter-spacing:0.037px">translate </span><span style="display:inline-block;width:32.04px;letter-spacing:0.623px">dog </span><span style="display:inline-block;width:68.67px;letter-spacing:0.072px">language </span><span style="display:inline-block;width:39.63px;letter-spacing:0.43px">word </span><span style="display:inline-block;width:23.93px;letter-spacing:0.511px">for </span><span style="display:inline-block;width:43.04px;letter-spacing:0.165px">word. </span><span style="display:inline-block;width:24.12px;letter-spacing:0.072px">It’s </span><span style="display:inline-block;width:40.71px;letter-spacing:0.384px">about</span></p>
<p class="t" style="left:1074.9px;top:601px;font-size:15.5px;line-height:20px;color:#111;white-space:pre"><span style="display:inline-block;width:54.86px;letter-spacing:0.451px">turning </span><span style="display:inline-block;width:66.29px;letter-spacing:-0.115px">everyday </span><span style="display:inline-block;width:56.83px;letter-spacing:0.24px">barking </span><span style="display:inline-block;width:31.57px;letter-spacing:0.567px">into </span><span style="display:inline-block;width:69.76px;letter-spacing:0.244px">moments </span><span style="display:inline-block;width:18.46px;letter-spacing:0.611px">of </span><span style="display:inline-block;width:49.04px;letter-spacing:0.137px">clarity, </span><span style="display:inline-block;width:30.47px;letter-spacing:0.098px">and </span><span style="display:inline-block;width:79.6px;letter-spacing:0.039px">sometimes </span><span style="display:inline-block;width:8.01px;letter-spacing:-0.612px">a</span></p>
<p class="t" style="left:1074.9px;top:623px;font-size:15.5px;line-height:20px;color:#111;white-space:pre"><span style="display:inline-block;width:41.26px;letter-spacing:0.618px">good </span><span style="display:inline-block;width:42.27px;letter-spacing:0.007px">laugh.</span></p>
<p class="t" style="left:1074.9px;top:661px;font-size:15.5px;line-height:20px;color:#111;white-space:pre"><span style="display:inline-block;width:69.72px;letter-spacing:-0.011px">Designed </span><span style="display:inline-block;width:23.93px;letter-spacing:0.511px">for </span><span style="display:inline-block;width:19.94px;letter-spacing:0.042px">all </span><span style="display:inline-block;width:29.18px;letter-spacing:-0.04px">day </span><span style="display:inline-block;width:62.71px;letter-spacing:0.302px">comfort, </span><span style="display:inline-block;width:75.04px;letter-spacing:-0.566px">BarkSense </span><span style="display:inline-block;width:44.88px;letter-spacing:0.018px">works </span><span style="display:inline-block;width:37.08px;letter-spacing:0.522px">right </span><span style="display:inline-block;width:27.76px;letter-spacing:0.634px">out </span><span style="display:inline-block;width:18.46px;letter-spacing:0.611px">of </span><span style="display:inline-block;width:26.78px;letter-spacing:0.306px">the </span><span style="display:inline-block;width:25.7px;letter-spacing:0.237px">box</span></p>
<p class="t" style="left:1074.9px;top:683px;font-size:15.5px;line-height:20px;color:#111;white-space:pre"><span style="display:inline-block;width:30.47px;letter-spacing:0.098px">and </span><span style="display:inline-block;width:33.82px;letter-spacing:0.052px">gets </span><span style="display:inline-block;width:57.06px;letter-spacing:0.031px">smarter </span><span style="display:inline-block;width:34.79px;letter-spacing:0.082px">over </span><span style="display:inline-block;width:35.24px;letter-spacing:0.411px">time </span><span style="display:inline-block;width:19px;letter-spacing:-0.842px">as </span><span style="display:inline-block;width:13.46px;letter-spacing:0.698px">it </span><span style="display:inline-block;width:45.41px;letter-spacing:-0.186px">learns </span><span style="display:inline-block;width:35.51px;letter-spacing:0.261px">your </span><span style="display:inline-block;width:42.33px;letter-spacing:0.249px">dog’s </span><span style="display:inline-block;width:64.94px;letter-spacing:0.035px">patterns. </span><span style="display:inline-block;width:32.86px;letter-spacing:-0.49px">Early</span></p>
<p class="t" style="left:1074.9px;top:704px;font-size:15.5px;line-height:20px;color:#111;white-space:pre"><span style="display:inline-block;width:50.29px;letter-spacing:-0.077px">testers </span><span style="display:inline-block;width:37px;letter-spacing:-0.231px">have </span><span style="display:inline-block;width:37.37px;letter-spacing:-0.137px">used </span><span style="display:inline-block;width:13.46px;letter-spacing:0.698px">it </span><span style="display:inline-block;width:18.87px;letter-spacing:0.815px">to </span><span style="display:inline-block;width:34.8px;letter-spacing:0.298px">spot </span><span style="display:inline-block;width:64.76px;letter-spacing:0.124px">behavior </span><span style="display:inline-block;width:51.59px;letter-spacing:-0.015px">trends, </span><span style="display:inline-block;width:51.68px;letter-spacing:-0.005px">reduce </span><span style="display:inline-block;width:84.87px;letter-spacing:-0.274px">unnecessary</span></p>
<p class="t" style="left:1074.9px;top:726px;font-size:15.5px;line-height:20px;color:#111;white-space:pre"><span style="display:inline-block;width:84.61px;letter-spacing:0.016px">corrections, </span><span style="display:inline-block;width:30.47px;letter-spacing:0.098px">and </span><span style="display:inline-block;width:29.53px;letter-spacing:0.056px">feel </span><span style="display:inline-block;width:40.79px;letter-spacing:0.29px">more </span><span style="display:inline-block;width:76.92px;letter-spacing:0.12px">connected </span><span style="display:inline-block;width:18.87px;letter-spacing:0.815px">to </span><span style="display:inline-block;width:36.06px;letter-spacing:0.319px">their </span><span style="display:inline-block;width:32.92px;letter-spacing:-0.137px">pets.</span></p>
<p class="t" style="left:1074.9px;top:764px;font-size:15.5px;line-height:20px;color:#111;white-space:pre"><span style="display:inline-block;width:13.43px;letter-spacing:0.251px">If </span><span style="display:inline-block;width:29.03px;letter-spacing:0.149px">this </span><span style="display:inline-block;width:53.93px;letter-spacing:-0.061px">sounds </span><span style="display:inline-block;width:28px;letter-spacing:0.107px">like </span><span style="display:inline-block;width:78.18px;letter-spacing:0.261px">something </span><span style="display:inline-block;width:35.51px;letter-spacing:0.261px">your </span><span style="display:inline-block;width:55.67px;letter-spacing:-0.17px">readers </span><span style="display:inline-block;width:46.86px;letter-spacing:0.41px">would </span><span style="display:inline-block;width:45.5px;letter-spacing:0.163px">enjoy, </span><span style="display:inline-block;width:41.24px;letter-spacing:-0.022px">we’re </span><span style="display:inline-block;width:43.02px;letter-spacing:0.157px">happy</span></p>
</main>
<svg class="ic" style="left:1570px;top:302px;width:7px;height:4.5px" viewBox="0 0 7 5"><path d="M0 5L3.5 0 7 5z" fill="#7a7a7a"/></svg>
<div class="b" style="left:1571px;top:311px;width:5px;height:381px;background:#868686;border-radius:3px;"></div>
<svg class="ic" style="left:1570px;top:781.5px;width:7px;height:4.5px" viewBox="0 0 7 5"><path d="M0 0L3.5 5 7 0z" fill="#7a7a7a"/></svg>
<div class="b" style="left:1486.8px;top:813.3px;width:92.2px;height:30px;background:#37bc9b;border-radius:3px;"></div>
<div class="t" style="left:1495.42px;top:820px;font-size:13.7px;line-height:18px;color:#fff;white-space:pre;"><span style="display:inline-block;width:57.38px">Edit Draft </span><span style="display:inline-block;font-size:16.5px;line-height:10px;position:relative;top:-1.2px;transform:scaleX(1.333);transform-origin:0 50%;-webkit-text-stroke-width:.3px">→</span></div>
</section>
</div>
</body>
</html>
